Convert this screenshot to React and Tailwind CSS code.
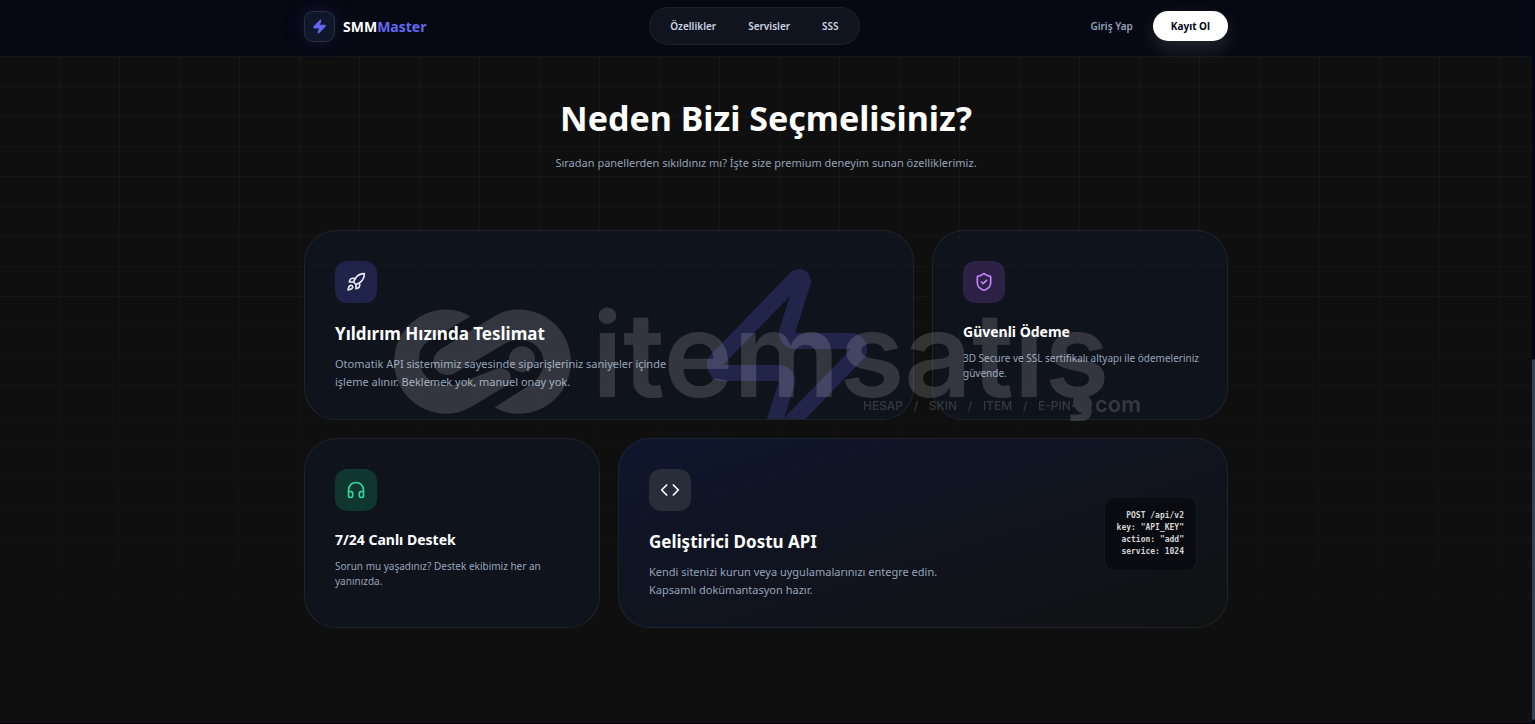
import React from "react";
import { Zap, Rocket, ShieldCheck, Headphones, Code } from "lucide-react";

const features = {
  speed: {
    title: "Yıldırım Hızında Teslimat",
    text: "Otomatik API sistemimiz sayesinde siparişleriniz saniyeler içinde işleme alınır. Beklemek yok, manuel onay yok.",
  },
  payment: {
    title: "Güvenli Ödeme",
    text: "3D Secure ve SSL sertifikalı altyapı ile ödemeleriniz güvende.",
  },
  support: {
    title: "7/24 Canlı Destek",
    text: "Sorun mu yaşadınız? Destek ekibimiz her an yanınızda.",
  },
  api: {
    title: "Geliştirici Dostu API",
    text: "Kendi sitenizi kurun veya uygulamalarınızı entegre edin. Kapsamlı dokümantasyon hazır.",
  },
};

function IconTile({ className, children }) {
  return (
    <div className={`flex size-[42px] items-center justify-center rounded-xl ${className}`}>
      {children}
    </div>
  );
}

function Card({ className = "", children }) {
  return (
    <article className={`relative min-h-[190px] overflow-hidden rounded-[32px] border border-slate-300/8 pt-[30px] pr-6 pb-7 pl-[30px] ${className}`}>
      {children}
    </article>
  );
}

function LargeCopy({ title, text }) {
  return (
    <>
      <h3 className="mt-4 text-[17px] leading-[30px] font-bold text-white">{title}</h3>
      <p className="mt-[6px] max-w-[345px] text-[11px] leading-[18px] text-[#94a3b8]">{text}</p>
    </>
  );
}

function SmallCopy({ title, text }) {
  return (
    <>
      <h3 className="mt-4 text-[14px] leading-[26px] font-bold text-white">{title}</h3>
      <p className="mt-[6px] text-[10px] leading-[15px] text-[#94a3b8]">{text}</p>
    </>
  );
}

function Header() {
  return (
    <header className="relative z-20 border-b border-white/5 bg-[#060813]">
      <div className="mx-auto flex h-14 max-w-[924px] items-start justify-between pt-[7px]">
        <a href="#" className="flex h-[38px] items-center gap-2 text-[14px] font-bold text-white">
          <span className="flex size-[31px] items-center justify-center rounded-[9px] border border-white/10 bg-[#0f172a] shadow-[0_0_20px_rgba(99,102,241,0.18)]">
            <Zap size={15} className="fill-[#6366f1] text-[#6366f1]" />
          </span>
          <span>SMM<span className="text-[#6366f1]">Master</span></span>
        </a>
        <nav className="mr-2 flex h-[38px] items-center gap-8 rounded-full border border-white/5 bg-[#10141f] px-5 text-[10px] font-semibold text-[#cbd5e1]">
          <a href="#ozellikler">Özellikler</a>
          <a href="#servisler">Servisler</a>
          <a href="#sss">SSS</a>
        </nav>
        <div className="flex h-[38px] items-center gap-5">
          <a href="#giris" className="text-[10px] font-semibold text-[#94a3b8]">Giriş Yap</a>
          <button type="button" className="h-[30px] rounded-full bg-white px-[18px] text-[10px] font-bold text-[#020617] shadow-[0_8px_20px_rgba(255,255,255,0.12)]">
            Kayıt Ol
          </button>
        </div>
      </div>
    </header>
  );
}

function Watermark() {
  return (
    <div aria-hidden="true" className="pointer-events-none absolute top-[65px] left-[89px] z-10 w-[748px] font-['Inter',sans-serif] text-white opacity-15">
      <div className="flex gap-[19px]">
        <svg className="mt-[13px] shrink-0" width="180" height="107" viewBox="310 265 540 320" fill="currentColor">
          <path d="M542 290C520 276 496 269 470 269A156.500 156.500 0 1 0 470 582C496 582 522 575 545 561L640 504C656 494 664 484 664 472C664 456 648 443 622 446L506 492C458 510 390 480 388 418C387 385 405 370 428 357Z" />
          <path d="M615 562C637 576 661 582 687 582A156.500 156.500 0 1 0 687 269C661 269 635 277 612 291L456 386C430 402 424 430 440 450C456 468 478 470 498 458L646 371C700 342 760 372 762 425C762 454 748 478 724 493Z" />
          <circle cx="697" cy="418" r="39" />
        </svg>
        <span className="text-[118px] leading-none font-semibold">itemsatış</span>
      </div>
      <div className="-mt-[22px] flex items-center justify-end gap-[3px]">
        <div className="flex w-[208px] justify-between pt-1 text-[12px] leading-none font-medium">
          <span>HESAP</span>
          <span>/</span>
          <span>SKIN</span>
          <span>/</span>
          <span>ITEM</span>
          <span>/</span>
          <span>E-PIN</span>
        </div>
        <span className="size-[18px] rounded-full bg-white" />
        <span className="text-[22px] leading-none font-semibold">com</span>
      </div>
    </div>
  );
}

export default function App() {
  return (
    <div className="flex min-h-screen bg-[#0f0f0f] font-['Noto_Sans','Open_Sans',sans-serif]">
      <div className="flex min-w-0 flex-1 flex-col">
        <Header />
        <main className="relative flex-1">
          <div className="pointer-events-none absolute inset-0 bg-[linear-gradient(to_right,transparent_59px,rgba(255,255,255,0.04)_59px),linear-gradient(to_bottom,transparent_29px,rgba(255,255,255,0.035)_29px)] mask-[linear-gradient(to_bottom,black,transparent)] bg-[length:60px_30px]" />
          <section id="ozellikler" className="relative mx-auto max-w-[924px] pt-[37px] pb-16">
            <div className="text-center">
              <h2 className="text-[34px] leading-[48px] font-bold text-white">Neden Bizi Seçmelisiniz?</h2>
              <p className="mt-3 text-[11px] leading-[18px] text-[#94a3b8]">
                Sıradan panellerden sıkıldınız mı? İşte size premium deneyim sunan özelliklerimiz.
              </p>
            </div>
            <div className="relative mt-[58px] grid grid-cols-3 gap-[18px]">
              <Card className="col-span-2 bg-[#0f172a]/50">
                <Zap size={192} className="absolute top-[30px] right-[30px] text-[#212549]" />
                <div className="relative">
                  <IconTile className="bg-[#20234a] text-[#e2e8f0]"><Rocket size={20} /></IconTile>
                  <LargeCopy {...features.speed} />
                </div>
              </Card>
              <Card className="bg-[#0f172a]/50">
                <IconTile className="bg-[#2d2145] text-[#c084fc]"><ShieldCheck size={20} /></IconTile>
                <SmallCopy {...features.payment} />
              </Card>
              <Card className="bg-[#0f172a]/50">
                <IconTile className="bg-[#0f362f] text-[#34d399]"><Headphones size={20} /></IconTile>
                <SmallCopy {...features.support} />
              </Card>
              <Card className="col-span-2 flex items-center justify-between bg-linear-to-br from-[#0f162d] to-[#111111]">
                <div className="max-w-[300px]">
                  <IconTile className="bg-[#282d3a] text-white"><Code size={20} /></IconTile>
                  <LargeCopy {...features.api} />
                </div>
                <pre className="mr-[6px] rounded-[10px] border border-white/5 bg-[#090b10] p-3 text-right font-['DejaVu_Sans_Mono',monospace] text-[8px] leading-3 font-bold text-[#d4d4d4]">
                  {'POST /api/v2\nkey: "API_KEY"\naction: "add"\nservice: 1024'}
                </pre>
              </Card>
              <Watermark />
            </div>
          </section>
        </main>
        <footer className="h-[3px] border-t border-white/5 bg-[#0b0810]" />
      </div>
      <div className="flex w-[3px] flex-col bg-[#020617]">
        <div className="basis-[359px]" />
        <div className="mb-1 flex-1 rounded-full bg-[#334155]" />
      </div>
    </div>
  );
}
